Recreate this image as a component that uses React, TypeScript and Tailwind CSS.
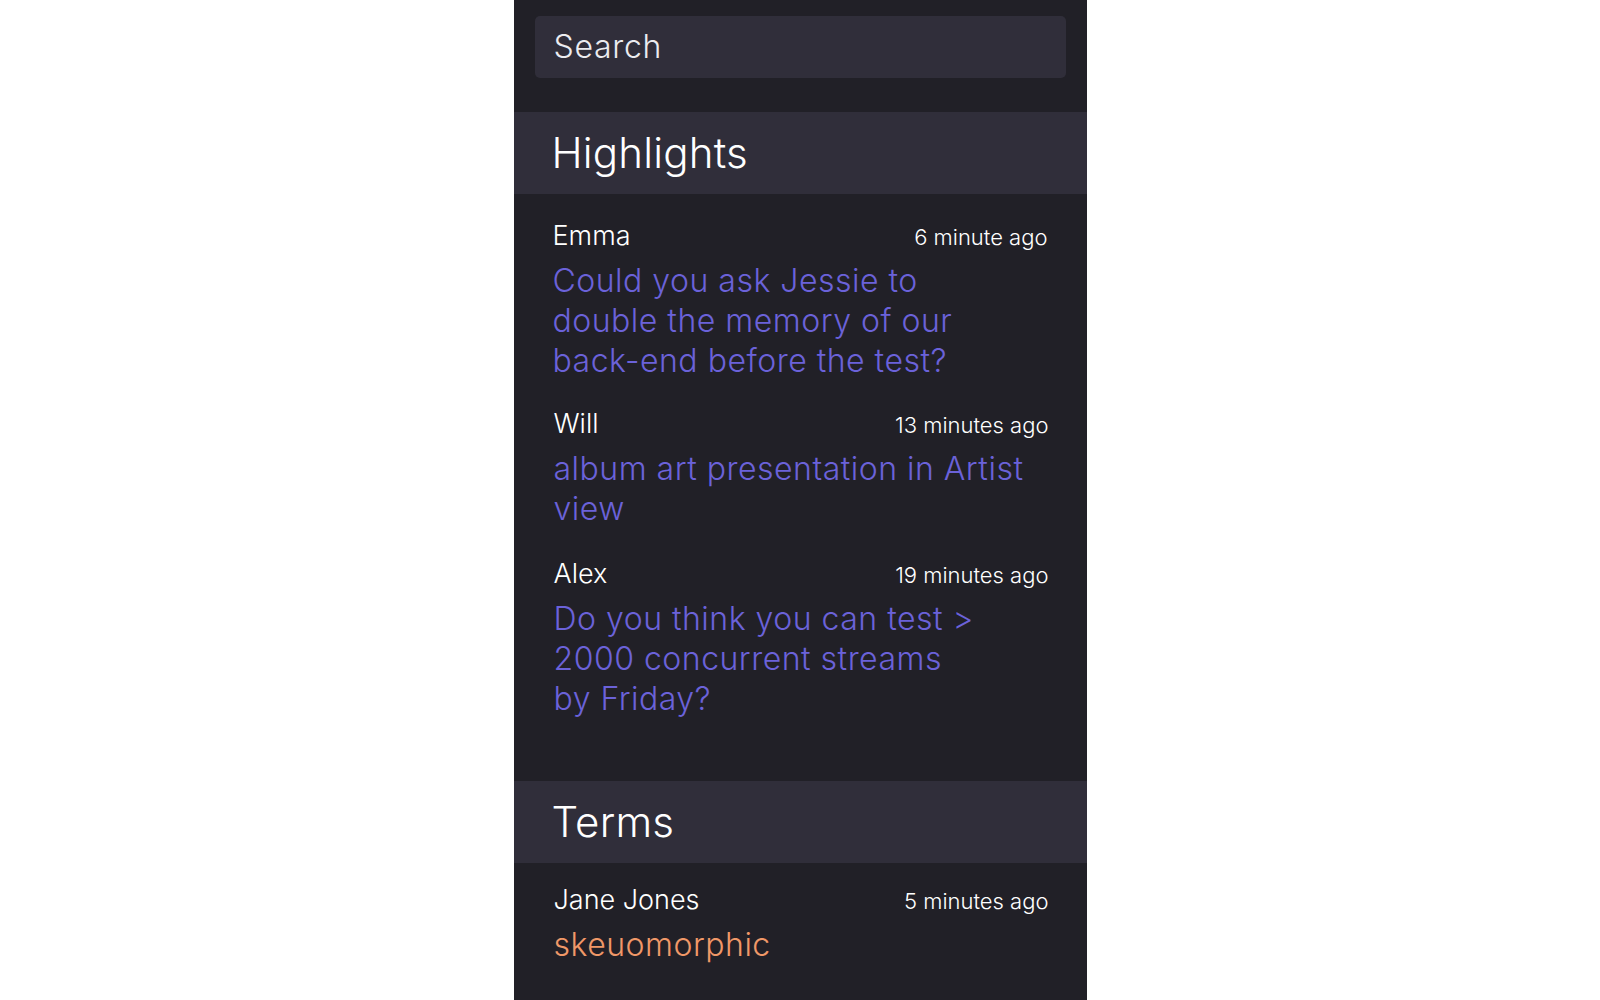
import React from 'react';

const highlights = [
    { name: 'Emma', time: '6 minute ago', lines: ['Could you ask Jessie to', 'double the memory of our', 'back-end before the test?'], first: true },
    { name: 'Will', time: '13 minutes ago', lines: ['album art presentation in Artist view'] },
    { name: 'Alex', time: '19 minutes ago', lines: ['Do you think you can test >', '2000 concurrent streams', 'by Friday?'] },
];

const SectionHeader: React.FC<{ title: string }> = ({ title }) => (
    <div className="h-[82px] bg-[#302e3a] flex items-center pl-[38px]">
        <h2 className="text-[42px] font-light text-white leading-none tracking-[0.2px]">{title}</h2>
    </div>
);

const Item: React.FC<{ name: string; time: string; lines: string[]; color: string; first?: boolean }> = ({ name, time, lines, color, first }) => (
    <div className={`flex flex-col gap-[10px] ${first ? '-ml-[1px] mr-[1px] mb-[-2px]' : ''}`}>
        <div className="flex items-center justify-between leading-[30px]">
            <span className="text-[27px] font-light text-white">{name}</span>
            <span className="text-[22px] font-light text-white translate-y-[1px]">{time}</span>
        </div>
        <p className={`text-[32px] font-light leading-[40px] tracking-[0.5px] ${color}`}>
            {lines.map((l, i) => (
                <React.Fragment key={i}>
                    {l}
                    {i < lines.length - 1 && <br />}
                </React.Fragment>
            ))}
        </p>
    </div>
);

export default function App() {
    return (
        <div className="min-h-screen bg-white flex justify-center" style={{ fontFamily: 'Inter, "Noto Sans", sans-serif' }}>
            <div className="w-[573px] min-h-screen bg-[#212027] flex flex-col">
                <div className="px-[21px] pt-[16px] pb-[34px]">
                    <div className="h-[62px] rounded-[5px] bg-[#302e3a] flex items-center px-[19px]">
                        <span className="text-[32px] font-light text-[#ececf0] tracking-[0.7px]">Search</span>
                    </div>
                </div>
                <SectionHeader title="Highlights" />
                <div className="pl-[40px] pr-[38px] pt-[27px] pb-[62px] flex flex-col gap-[30px]">
                    {highlights.map(h => (
                        <Item key={h.name} {...h} color="text-[#6b62d9]" />
                    ))}
                </div>
                <SectionHeader title="Terms" />
                <div className="pl-[40px] pr-[38px] pt-[22px]">
                    <Item name="Jane Jones" time="5 minutes ago" lines={['skeuomorphic']} color="text-[#f09868]" />
                </div>
            </div>
        </div>
    );
}
